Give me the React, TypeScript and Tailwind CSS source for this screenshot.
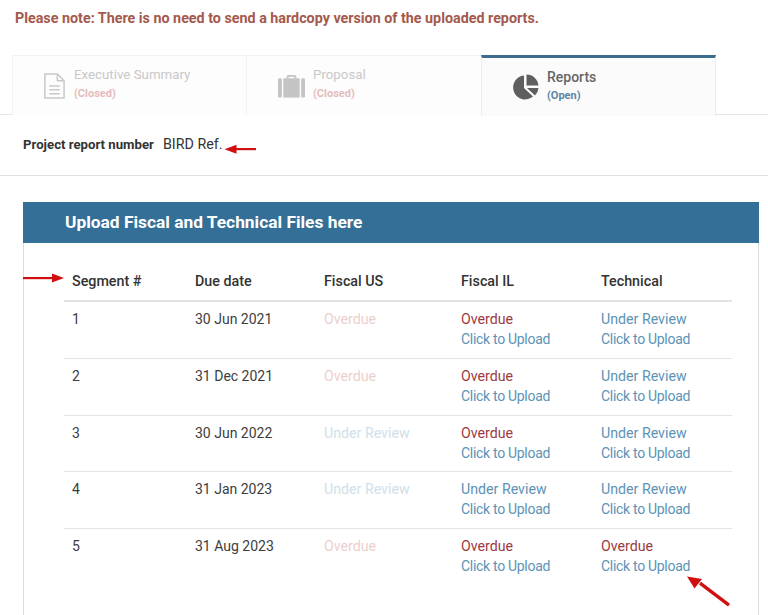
const font = "font-['Roboto',sans-serif]";

type Status = "overdue" | "overdueFaded" | "review" | "reviewFaded";

const rows: { seg: number; due: string; us: Status; il: Status; tech: Status }[] = [
  { seg: 1, due: "30 Jun 2021", us: "overdueFaded", il: "overdue", tech: "review" },
  { seg: 2, due: "31 Dec 2021", us: "overdueFaded", il: "overdue", tech: "review" },
  { seg: 3, due: "30 Jun 2022", us: "reviewFaded", il: "overdue", tech: "review" },
  { seg: 4, due: "31 Jan 2023", us: "reviewFaded", il: "review", tech: "review" },
  { seg: 5, due: "31 Aug 2023", us: "overdueFaded", il: "overdue", tech: "overdue" },
];

function StatusCell({ status, upload }: { status: Status; upload?: boolean }) {
  const label = status === "overdue" || status === "overdueFaded" ? "Overdue" : "Under Review";
  const color =
    status === "overdue"
      ? "text-[#9c3a3f]"
      : status === "overdueFaded"
        ? "text-[#eccfcc]"
        : status === "review"
          ? "text-[#5c93b5]"
          : "text-[#cfe0ea]";
  return (
    <div className="flex flex-col">
      <span className={`${color} text-[14.200px]`}>{label}</span>
      {upload && <span className="text-[#5c93b5] text-[14px] leading-[19px] tracking-[-0.3px]">Click to Upload</span>}
    </div>
  );
}

function TabItem({
  icon,
  title,
  sub,
  active,
  width,
  indent,
}: {
  icon: React.ReactNode;
  title: string;
  sub: string;
  active?: boolean;
  width: string;
  indent: string;
}) {
  return (
    <div
      className={`${width} ${indent} flex items-center gap-[8px] ${
        active
          ? "h-[61px] mb-[-1px] border-t-[3px] border-x border-t-[#3d6b8c] border-x-[#ececec] bg-[#fbfbfb]"
          : "h-[60px] border-t border-l border-[#f3f3f3] bg-[#fdfdfd]"
      }`}
    >
      {icon}
      <div className="flex flex-col mb-[2px]">
        <span className={active ? "leading-[19px] text-[14px] font-medium text-[#666]" : "leading-[18px] text-[13.300px] text-[#c8c8c8]"}>{title}</span>
        <span className={active ? "leading-[18px] text-[11px] font-bold text-[#5b86a6]" : "mt-[1px] leading-[18px] text-[11px] font-bold text-[#e5bcbc]"}>{sub}</span>
      </div>
    </div>
  );
}

export default function App() {
  return (
    <div className={`${font} relative w-[768px] h-[615px] overflow-hidden bg-white`}>
      <div className="h-[55px] pl-[15px] pt-[9px] text-[14.300px] leading-[18px] font-bold text-[#a5594c]">
        Please note: There is no need to send a hardcopy version of the uploaded reports.
      </div>

      <div className="flex pl-[12px] border-b border-[#e4e4e4] h-[60px]">
        <TabItem
          width="w-[234px]"
          indent="pl-[30px]"
          title="Executive Summary"
          sub="(Closed)"
          icon={
            <svg width="23" height="28" viewBox="0 0 24 28" fill="none" stroke="#c9c9c9" strokeWidth="1.6">
              <path d="M2 1.500h13l7 7v18H2z" />
              <path d="M15 1.500v7h7M6.500 14h11M6.500 18h11M6.500 22h11" />
            </svg>
          }
        />
        <TabItem
          width="w-[235px]"
          indent="pl-[31px]"
          title="Proposal"
          sub="(Closed)"
          icon={
            <svg width="27" height="24" viewBox="0 0 28 24" fill="#c4c4c4">
              <path d="M9 4V2.500C9 1.200 10 .5 11 .5h6c1 0 2 .7 2 2V4h-2V2.500h-6V4z" />
              <rect x="0" y="4" width="4" height="20" rx="1.500" />
              <rect x="5.500" y="4" width="17" height="20" />
              <rect x="24" y="4" width="4" height="20" rx="1.500" />
            </svg>
          }
        />
        <TabItem
          active
          width="w-[235px]"
          indent="pl-[31px]"
          title="Reports"
          sub="(Open)"
          icon={
            <svg width="26" height="26" viewBox="0 0 26 26" fill="#5f5f5f">
              <path d="M11 1.500A12 12 0 1 0 20 22.500L11 14z" />
              <path d="M13.500 0.500A12 12 0 0 1 25.500 11.500H13.500z" />
              <path d="M14 14h11.500A12 12 0 0 1 22 21.500z" />
            </svg>
          }
        />
      </div>

      <div className="h-[61px] border-b border-[#e2e2e2] flex items-center pl-[23px] text-[13.200px] text-[#333]">
        <span className="font-bold">Project report number</span>
        <span className="ml-[9px] text-[14.300px]">BIRD Ref.</span>
      </div>

      <div className="ml-[23px] mt-[26px] w-[736px] h-[420px] border-x border-[#dcdcdc]">
        <div className="h-[41px] mx-[-1px] bg-[#346f97] flex items-center pl-[42px] text-[17.350px] font-bold text-white">
          Upload Fiscal and Technical Files here
        </div>

        <div className="ml-[40px] w-[668px] text-[14px] leading-[21px] text-[#3d3d3d]">
          <div className="h-[59px] pt-[28px] border-b-2 border-[#e4e4e4] grid grid-cols-[123px_129px_137px_140px_139px] pl-[8px] text-[14.300px] font-medium text-[#333]">
            <span>Segment #</span>
            <span>Due date</span>
            <span>Fiscal US</span>
            <span>Fiscal IL</span>
            <span>Technical</span>
          </div>
          {rows.map((r) => (
            <div
              key={r.seg}
              className="h-[56.750px] pt-[7px] border-b border-[#e4e4e4] last:border-b-0 grid grid-cols-[123px_129px_137px_140px_139px] pl-[8px]"
            >
              <span>{r.seg}</span>
              <span>{r.due}</span>
              <StatusCell status={r.us} />
              <StatusCell status={r.il} upload />
              <StatusCell status={r.tech} upload />
            </div>
          ))}
        </div>
      </div>

      {/* red annotation arrows */}
      <svg className="absolute left-0 top-0" width="768" height="615" fill="#d01010" stroke="none">
        <path d="M234 148h22v2.200h-22z" />
        <path d="M224.500 149.200l12-4.500v9z" />
        <path d="M23 277h32v2.200h-32z" />
        <path d="M64 278l-12-4.500v9z" />
        <path d="M728 606.500l-29-22 2-2.800 29 22z" />
        <path d="M687 576.500l15 2.500-7.500 9.500z" />
      </svg>
    </div>
  );
}
